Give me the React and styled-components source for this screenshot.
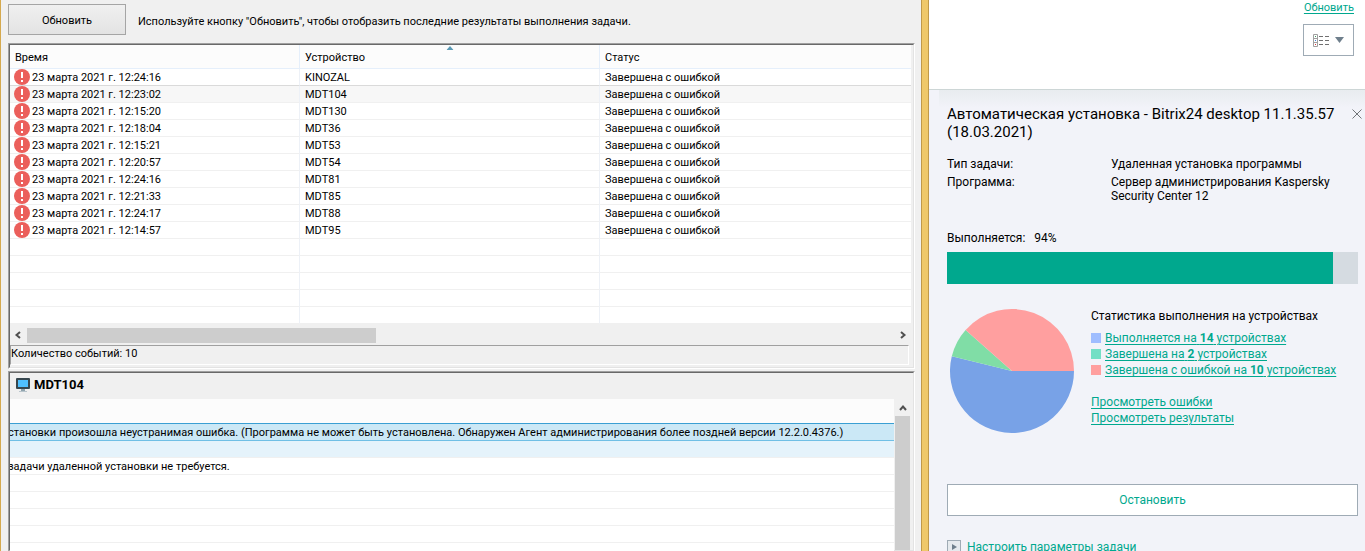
import React from 'react'

import styled, { createGlobalStyle } from 'styled-components'

const GlobalStyle = createGlobalStyle`
    *{
        box-sizing:border-box;
        margin:0;
        padding:0;
    }

    body{
        background:#f2f3f9;
        color:#000;
        font-family:Roboto, "Noto Sans", sans-serif;
        font-size:11px;
        line-height:16px;
    }

    button{
        font-family:inherit;
    }
`;

const Page = styled.div`
    display:flex;
    height:100vh;
    overflow:hidden;
`;

/* results window */

const ResultsWindow = styled.main`
    flex:1;
    min-width:0;
    display:flex;
    flex-direction:column;
    background:#f0f0f0;
    border-left:1px solid #d5a94e;
    padding-left:7px;
`;

const WindowFrame = styled.div`
    flex:none;
    width:8px;
    background:#efc86a;
    border-left:1px solid #c0994a;
    border-right:1px solid #c0994a;
`;

const Toolbar = styled.div`
    display:flex;
    align-items:center;
    gap:12px;
    height:43px;
    padding-bottom:4px;

    p{padding-top:4px;}
`;

const RefreshButton = styled.button`
    width:118px;
    height:31px;
    padding-top:2px;
    background:linear-gradient(#f0f0f0, #e3e3e3);
    border:1px solid #a5a5a5;
    font-size:11px;
`;

const Panel = styled.section`
    display:flex;
    flex-direction:column;
    margin-right:6px;
    border-style:solid;
    border-width:1px;
    border-color:#a0a0a0 #fff #fff #a0a0a0;
    ${props => props.$grow && 'flex:1; min-height:0; margin-top:2px; border-bottom:none;'}
`;

const PanelInner = styled.div`
    flex:1;
    min-height:0;
    display:flex;
    flex-direction:column;
    border-style:solid;
    border-width:1px;
    border-color:#696969 #e3e3e3 #e3e3e3 #696969;
`;

const EventTable = styled.table`
    table-layout:fixed;
    width:calc(100% - 2px);
    border-spacing:0;
    background:#fff;

    th{
        position:relative;
        height:24px;
        padding:3px 0 0 5px;
        background:#fcfcfc;
        border-right:1px solid #e5effb;
        border-bottom:1px solid #e5effb;
        font-weight:400;
        text-align:left;
    }

    td{
        height:17px;
        padding:2px 0 0 5px;
        border-right:1px solid #edf1f7;
        border-bottom:1px solid #f0f0f0;
        line-height:14px;
        white-space:nowrap;
    }

    td:first-child{
        padding:0 0 0 4px;
        line-height:16px;
    }

    th:last-child, td:last-child{
        border-right:none;
    }
`;

const EventRow = styled.tr`
    td{
        background:${props => props.$selected ? '#f7f7f7' : '#fff'};
        ${props => props.$beforeSelected && 'border-bottom-color:#dadada;'}
    }
`;

const TimeCell = styled.div`
    display:flex;
    align-items:center;
    gap:2px;
    height:16px;

    svg{flex:none;}

    span{
        padding-top:2px;
        line-height:14px;
    }
`;

const SortMark = styled.svg`
    position:absolute;
    top:1px;
    left:50%;
    transform:translateX(-50%);
`;

const HScroll = styled.div`
    display:flex;
    align-items:center;
    height:16px;
    margin-top:3px;
    padding:0 6px 0 4px;

    span{
        width:349px;
        height:15px;
        margin:0 auto 0 5px;
        background:#cdcdcd;
    }
`;

const StatusBar = styled.div`
    height:20px;
    margin:2px 4px 2px 0;
    border-style:solid;
    border-width:1px;
    border-color:#a0a0a0 #fff #fff #a0a0a0;
`;

const DeviceTitle = styled.h2`
    display:flex;
    align-items:center;
    gap:4px;
    height:26px;
    padding:0 0 2px 6px;
    font-size:13px;
`;

const DetailArea = styled.div`
    flex:1;
    min-height:0;
    display:flex;
    padding-right:3px;
`;

const DetailTable = styled.table`
    flex:1;
    align-self:flex-start;
    table-layout:fixed;
    width:100%;
    border-spacing:0;
    background:#fff;

    th{
        height:24px;
        background:#fcfcfc;
    }

    td{
        height:17px;
        padding-top:2px;
        border-bottom:1px solid #f0f0f0;
        line-height:14px;
        white-space:nowrap;
        overflow:hidden;
    }
`;

const DetailRow = styled.tr`
    && td{
        ${props => props.$state === 'selected' && `
            height:18px;
            background:#cbe8f6;
            border-top:1px solid #3a9fd3;
            border-bottom:1px solid #70bfe5;
        `}
        ${props => props.$state === 'soft' && `
            background:#e5f3fb;
        `}
    }

    /* the list is scrolled sideways, the start of each line is cut */
    span{
        display:block;
        margin-left:${props => props.$shift || 0}px;
    }
`;

const VScroll = styled.div`
    flex:none;
    width:16px;
    display:flex;
    flex-direction:column;
    align-items:center;
    padding-left:1px;

    svg{margin:5px 0 4px;}

    span{
        flex:1;
        width:15px;
        background:#cdcdcd;
    }
`;

/* task sidebar */

const Sidebar = styled.aside`
    flex:none;
    width:436px;
    font-size:12px;
`;

const SidebarTop = styled.div`
    display:flex;
    flex-direction:column;
    align-items:flex-end;
    gap:8px;
    height:90px;
    padding-right:11px;
    background:#fff;
    border-bottom:1px solid #cdd6d6;
`;

const Link = styled.a`
    color:#00a88e;
    font-size:${props => props.$small ? '11px' : '12px'};
    text-decoration:${props => props.$plain ? 'none' : 'underline'};
    text-underline-offset:2px;
`;

const ViewButton = styled.button`
    display:flex;
    align-items:center;
    justify-content:center;
    gap:5px;
    width:51px;
    height:32px;
    background:#fff;
    border:1px solid #9fabb5;
`;

const Task = styled.div`
    margin-left:10px;
    padding:15px 7px 0 8px;
    background:linear-gradient(#e8ecef, #f2f3f9 18px);
`;

const TaskHeader = styled.header`
    display:flex;
    justify-content:space-between;
    align-items:flex-start;
    margin-right:-4px;

    h1{
        font-size:15px;
        line-height:18px;
        font-weight:400;
    }
`;

const CloseButton = styled.button`
    flex:none;
    width:11px;
    height:18px;
    background:none;
    border:none;
`;

const Facts = styled.dl`
    display:grid;
    grid-template-columns:164px 1fr;
    row-gap:4px;
    margin-top:16px;
    padding-right:20px;
    line-height:14px;
`;

const Progress = styled.div`
    margin-top:27px;

    div{
        height:32px;
        margin-top:6px;
        background:#d5dbe1;
    }

    div span{
        display:block;
        height:100%;
        background:#00a88e;
    }

    b{
        margin-left:6px;
        font-weight:400;
    }
`;

const Stats = styled.div`
    display:flex;
    gap:17px;
    margin-top:24px;

    h3{
        margin-bottom:6px;
        font-size:12px;
        font-weight:400;
    }

    svg{
        flex:none;
        margin:1px 0 0 3px;
    }
`;

const Legend = styled.ul`
    list-style:none;
    margin-bottom:16px;

    li{
        display:flex;
        align-items:center;
        gap:4px;
        height:16px;
        white-space:nowrap;
    }
`;

const Swatch = styled.i`
    width:10px;
    height:10px;
    background:${props => props.$color};
`;

const LinkList = styled.div`
    display:flex;
    flex-direction:column;
    align-items:flex-start;
`;

const StopButton = styled.button`
    display:block;
    width:100%;
    height:32px;
    margin-top:51px;
    background:#fff;
    border:1px solid #9fabb5;
    color:#00a88e;
    font-size:12px;
`;

const SettingsLine = styled.div`
    display:flex;
    align-items:center;
    gap:6px;
    margin-top:23px;
`;

const events = [
    ['12:24:16', 'KINOZAL'],
    ['12:23:02', 'MDT104'],
    ['12:15:20', 'MDT130'],
    ['12:18:04', 'MDT36'],
    ['12:15:21', 'MDT53'],
    ['12:20:57', 'MDT54'],
    ['12:24:16', 'MDT81'],
    ['12:21:33', 'MDT85'],
    ['12:24:17', 'MDT88'],
    ['12:14:57', 'MDT95'],
];

const selectedIndex = 1;

const stats = [
    { before: 'Выполняется на', count: 14, pie: '#78a2e7', swatch: '#9fbdff' },
    { before: 'Завершена на', count: 2, pie: '#80dda6', swatch: '#73dfc5' },
    { before: 'Завершена с ошибкой на', count: 10, pie: '#ff9f9f', swatch: '#ff9f9f' },
];

const ErrorIcon = () => (
    <svg width="16" height="16" viewBox="0 0 16 16">
        <circle cx="8" cy="8" r="8" fill="#eb5f5b" />
        <path d="M7 3h2v6H7z" fill="#fff" />
        <rect x="7" y="11" width="2" height="2" fill="#fff" />
    </svg>
)

const MonitorIcon = () => (
    <svg width="14" height="14" viewBox="0 0 14 14">
        <rect width="14" height="11" rx="1" fill="#37474f" />
        <rect x="2" y="2" width="10" height="7" fill="#4fc0ff" />
        <path d="M5 11h4v2H5z" fill="#90a4ae" />
        <path d="M3 13h8v1H3z" fill="#b9c5cc" />
    </svg>
)

const ListIcon = () => (
    <svg width="17" height="13" viewBox="0 0 17 13" fill="none">
        <path d="M.5 .5h4v12h-4zM.5 4.500h4M.5 8.500h4" stroke="#a0a0a0" />
        <path d="M6 2.500h4M12 2.500h4M6 6.500h4M12 6.500h4M6 10.500h4M12 10.500h4" stroke="#707070" />
        <path d="M2 2.500h1" stroke="#3c9a5f" />
        <path d="M2 6.500h1" stroke="#3f7fe0" />
        <path d="M2 10.500h1" stroke="#d83a3a" />
    </svg>
)

const Chevron = ({ turn }) => (
    <svg width="8" height="8" viewBox="0 0 8 8">
        <path d="M6 1L2.500 4L6 7" fill="none" stroke="#505050" strokeWidth="2" transform={`rotate(${turn} 4 4)`} />
    </svg>
)

const Pie = () => {
    const total = stats.reduce((sum, s) => sum + s.count, 0)
    const point = n => {
        const a = n / total * 2 * Math.PI
        return `${62 + 62 * Math.cos(a)} ${62 + 62 * Math.sin(a)}`
    }
    let from = 0

    return (
        <svg width="124" height="124" viewBox="0 0 124 124">
            {stats.map(s => {
                const start = from
                from += s.count
                const large = s.count > total / 2 ? 1 : 0
                return <path key={s.before} d={`M62 62L${point(start)}A62 62 0 ${large} 1 ${point(from)}Z`} fill={s.pie} />
            })}
        </svg>
    )
}

const Results = () => (
    <ResultsWindow>
        <Toolbar>
            <RefreshButton type="button">Обновить</RefreshButton>
            <p>Используйте кнопку "Обновить", чтобы отобразить последние результаты выполнения задачи.</p>
        </Toolbar>
        <Panel>
            <PanelInner>
                <EventTable>
                    <colgroup>
                        <col style={{ width: 290 }} />
                        <col style={{ width: 300 }} />
                        <col />
                    </colgroup>
                    <thead>
                        <tr>
                            <th>Время</th>
                            <th>
                                Устройство
                                <SortMark width="7" height="4" viewBox="0 0 7 4">
                                    <path d="M0 4L3.500 0L7 4z" fill="#5a9ab5" />
                                </SortMark>
                            </th>
                            <th>Статус</th>
                        </tr>
                    </thead>
                    <tbody>
                        {events.map(([time, device], i) => (
                            <EventRow key={device} $selected={i === selectedIndex} $beforeSelected={i === selectedIndex - 1}>
                                <td>
                                    <TimeCell><ErrorIcon /><span>23 марта 2021 г. {time}</span></TimeCell>
                                </td>
                                <td>{device}</td>
                                <td>Завершена с ошибкой</td>
                            </EventRow>
                        ))}
                        {[1, 2, 3, 4, 5].map(n => (
                            <EventRow key={n}><td /><td /><td /></EventRow>
                        ))}
                    </tbody>
                </EventTable>
                <HScroll>
                    <Chevron turn={0} />
                    <span />
                    <Chevron turn={180} />
                </HScroll>
                <StatusBar>Количество событий: 10</StatusBar>
            </PanelInner>
        </Panel>
        <Panel $grow>
            <PanelInner>
                <DeviceTitle><MonitorIcon />MDT104</DeviceTitle>
                <DetailArea>
                    <DetailTable>
                        <thead>
                            <tr><th /></tr>
                        </thead>
                        <tbody>
                            <DetailRow $state="selected" $shift={-2}>
                                <td><span>становки произошла неустранимая ошибка. (Программа не может быть установлена. Обнаружен Агент администрирования более поздней версии 12.2.0.4376.)</span></td>
                            </DetailRow>
                            <DetailRow $state="soft"><td /></DetailRow>
                            <DetailRow $shift={-2}>
                                <td><span>задачи удаленной установки не требуется.</span></td>
                            </DetailRow>
                            {[1, 2, 3, 4, 5].map(n => (
                                <DetailRow key={n}><td /></DetailRow>
                            ))}
                        </tbody>
                    </DetailTable>
                    <VScroll>
                        <Chevron turn={90} />
                        <span />
                    </VScroll>
                </DetailArea>
            </PanelInner>
        </Panel>
    </ResultsWindow>
)

const TaskSidebar = () => (
    <Sidebar>
        <SidebarTop>
            <Link href="#refresh" $small>Обновить</Link>
            <ViewButton type="button" aria-label="Вид">
                <ListIcon />
                <svg width="9" height="6" viewBox="0 0 9 6"><path d="M0 0h9L4.500 6z" fill="#6f7f8c" /></svg>
            </ViewButton>
        </SidebarTop>
        <Task>
            <TaskHeader>
                <h1>Автоматическая установка - Bitrix24 desktop 11.1.35.57 (18.03.2021)</h1>
                <CloseButton type="button" aria-label="Закрыть">
                    <svg width="10" height="10" viewBox="0 0 10 10"><path d="M.5 .5l9 9M9.500 .5l-9 9" stroke="#707478" /></svg>
                </CloseButton>
            </TaskHeader>
            <Facts>
                <dt>Тип задачи:</dt>
                <dd>Удаленная установка программы</dd>
                <dt>Программа:</dt>
                <dd>Сервер администрирования Kaspersky Security Center 12</dd>
            </Facts>
            <Progress>
                <p>Выполняется: <b>94%</b></p>
                <div><span style={{ width: '94%' }} /></div>
            </Progress>
            <Stats>
                <Pie />
                <div>
                    <h3>Статистика выполнения на устройствах</h3>
                    <Legend>
                        {stats.map(s => (
                            <li key={s.before}>
                                <Swatch $color={s.swatch} />
                                <Link href="#devices">{s.before} <b>{s.count}</b> устройствах</Link>
                            </li>
                        ))}
                    </Legend>
                    <LinkList>
                        <Link href="#errors">Просмотреть ошибки</Link>
                        <Link href="#results">Просмотреть результаты</Link>
                    </LinkList>
                </div>
            </Stats>
            <StopButton type="button">Остановить</StopButton>
            <SettingsLine>
                <svg width="14" height="14" viewBox="0 0 14 14">
                    <rect x=".5" y=".5" width="13" height="13" fill="#e6eaee" stroke="#9fabb5" />
                    <path d="M5 4l5 3l-5 3z" fill="#6f7f8c" />
                </svg>
                <Link href="#settings" $plain>Настроить параметры задачи</Link>
            </SettingsLine>
        </Task>
    </Sidebar>
)

const App = () => (
    <Page>
        <GlobalStyle />
        <Results />
        <WindowFrame />
        <TaskSidebar />
    </Page>
)

export default App
